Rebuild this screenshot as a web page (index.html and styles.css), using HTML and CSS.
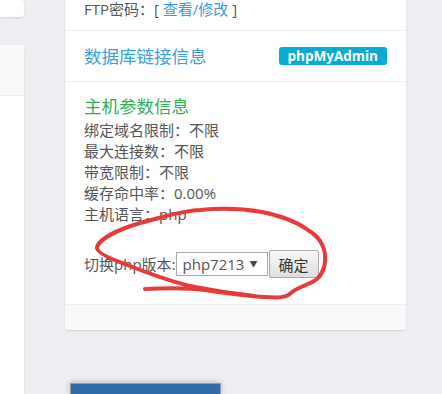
FILE: index.html
```html
<!DOCTYPE html>
<html lang="zh-CN">
<head>
<meta charset="utf-8">
<title>主机信息</title>
<link rel="stylesheet" href="styles.css">
</head>
<body>
<div class="page">
  <aside class="side">
    <div class="side-card side-card-top"></div>
    <div class="side-card side-card-main">
      <div class="side-head"></div>
      <div class="side-body"></div>
    </div>
  </aside>
  <main class="main">
    <section class="card">
      <div class="row row-ftp">
        <span class="label">FTP密码：</span><span class="bracket">[ </span><a class="link" href="#">查看/修改</a><span class="bracket"> ]</span>
      </div>
      <div class="row row-db">
        <span class="title-blue">数据库链接信息</span>
        <span class="badge">phpMyAdmin</span>
      </div>
      <div class="row row-host">
        <div class="title-green">主机参数信息</div>
        <div class="line">绑定域名限制：不限</div>
        <div class="line">最大连接数：不限</div>
        <div class="line">带宽限制：不限</div>
        <div class="line">缓存命中率：0.00%</div>
        <div class="line">主机语言：php</div>
        <div class="switch">
          <span class="switch-label">切换php版本:</span>
          <span class="select"><span class="select-text">php7213</span><span class="select-arrow">▼</span></span>
          <button class="btn" type="button">确定</button>
        </div>
      </div>
      <div class="card-foot"></div>
    </section>
    <div class="btn-blue"></div>
  </main>
</div>
<svg class="scribble" width="442" height="394" viewBox="0 0 442 394" aria-hidden="true">
  <path d="M145,289 C165,288 190,288 205,290 C225,293 245,296 265,297 C278,298 287,298 292,292 C300,286 314,283 318,278 C324,272 326,262 325,255 C324,245 318,236 308,230 C297,222 282,216 262,212 C245,209 220,208 200,210 C180,211 160,218 140,223 C120,229 100,238 97,247 C96,252 108,258 125,264 C145,272 170,282 195,287 C215,291 235,294 255,296" fill="none" stroke="#e8393b" stroke-width="4" stroke-linecap="round" stroke-linejoin="round"/>
</svg>
</body>
</html>
```

FILE: styles.css
```css
html, body {
  margin: 0;
  padding: 0;
  width: 442px;
  height: 394px;
  overflow: hidden;
  background: #edeef2;
}

body {
  font-family: "Open Sans", "Noto Sans CJK SC", sans-serif;
  color: #555;
  position: relative;
}

.page {
  display: flex;
  align-items: flex-start;
  gap: 41px;
  height: 394px;
  overflow: hidden;
}

.side {
  width: 24px;
  display: flex;
  flex-direction: column;
}

.side-card {
  background: #fff;
  border-radius: 0 3px 3px 0;
  box-shadow: 0 1px 2px rgba(0, 0, 0, 0.12);
}

.side-card-top {
  height: 17px;
}

.side-card-main {
  margin-top: 28px;
  height: 349px;
  border-radius: 0 3px 0 0;
}

.side-head {
  height: 50px;
  background: #f9f9f9;
  border-bottom: 1px solid #eeeeee;
}

.main {
  width: 341px;
  display: flex;
  flex-direction: column;
}

.card {
  background: #fff;
  border-radius: 0 0 3px 3px;
  box-shadow: 0 1px 2px rgba(0, 0, 0, 0.13);
}

.row {
  padding: 0 19px;
  border-bottom: 1px solid #eeeeee;
}

.row-ftp {
  box-sizing: border-box;
  height: 31px;
  font-size: 15px;
  line-height: 18px;
}

.label, .bracket {
  color: #555;
}

.link {
  color: #3c9bd6;
  text-decoration: none;
}

.row-db {
  height: 51px;
  box-sizing: border-box;
  display: flex;
  align-items: center;
  justify-content: space-between;
}

.title-blue {
  color: #3aa2d8;
  font-size: 17.5px;
  line-height: 24px;
}

.badge {
  background: #0aabd3;
  color: #fff;
  font-weight: 700;
  font-size: 13.5px;
  line-height: 18px;
  height: 18px;
  padding: 0 9px;
  border-radius: 3px;
}

.row-host {
  padding-top: 12px;
  padding-bottom: 26px;
  border-bottom: 1px solid #efefef;
  font-size: 15px;
}

.title-green {
  color: #2fae5c;
  font-size: 17.5px;
  line-height: 24px;
  margin-bottom: 2px;
}

.line {
  line-height: 21px;
}

.switch {
  margin-top: 25px;
  display: flex;
  align-items: center;
  height: 28px;
}

.switch-label {
  flex: 0 0 91px;
  white-space: nowrap;
  line-height: 21px;
}

.select {
  box-sizing: border-box;
  flex: 0 0 92px;
  height: 24px;
  border: 1px solid #a9a9a9;
  background: #fff;
  display: flex;
  align-items: center;
  padding-left: 6px;
  font-size: 15px;
  color: #555;
}

.select-text {
  flex: 1;
  line-height: 22px;
}

.select-arrow {
  font-size: 8px;
  color: #444;
  margin-right: 9px;
  line-height: 22px;
}

.btn {
  box-sizing: border-box;
  flex: 0 0 50px;
  height: 28px;
  margin-left: 1px;
  border: 1px solid #a8a8a8;
  border-radius: 2px;
  background: linear-gradient(#f8f8f8, #dedede);
  font-family: "Noto Sans CJK SC", sans-serif;
  font-size: 15px;
  color: #333;
  padding: 0;
}

.card-foot {
  height: 25px;
  background: #f9f9f9;
  border-radius: 0 0 3px 3px;
}

.btn-blue {
  margin-top: 53px;
  margin-left: 5px;
  width: 151px;
  height: 11px;
  box-sizing: border-box;
  background: #2f6ca7;
  border: 1px solid #8e9aa8;
  border-bottom: 0;
  box-shadow: 0 0 6px rgba(0, 0, 0, 0.25);
}

.scribble {
  position: absolute;
  left: 0;
  top: 0;
  pointer-events: none;
}
```
